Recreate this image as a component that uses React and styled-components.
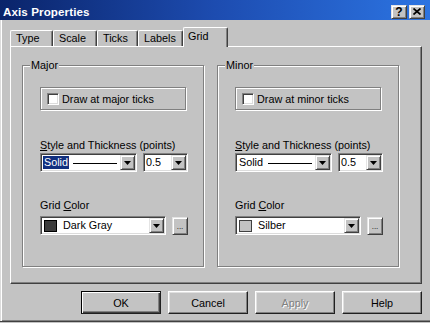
import React from "react";
import styled, { createGlobalStyle } from "styled-components";

const Global = createGlobalStyle`
  html, body {
    margin: 0;
    padding: 0;
    background: #c3c3c3;
  }
  body {
    font-family: "Liberation Sans", Arial, sans-serif;
    font-size: 10.8px;
    color: #000;
  }
`;

const Window = styled.div`
  width: 430px;
  height: 322px;
  box-sizing: border-box;
  display: flex;
  flex-direction: column;
  background: #c3c3c3;
  border-bottom: 1px solid #404040;
  box-shadow: inset 0 -1px 0 #808080;
`;

const TitleBar = styled.div`
  height: 20px;
  flex: none;
  box-sizing: border-box;
  display: flex;
  align-items: center;
  padding: 3px 5px 0 3px;
  background: linear-gradient(to right, #0a246a 0%, #1d4cb0 50%, #2c74e2 100%);
`;

const Title = styled.div`
  flex: 1;
  color: #fff;
  font-weight: bold;
  font-size: 11.6px;
  letter-spacing: 0.1px;
`;

const Raised = styled.div`
  box-sizing: border-box;
  background: #c3c3c3;
  border-top: 1px solid #e4e4e4;
  border-left: 1px solid #e4e4e4;
  border-right: 1px solid #404040;
  border-bottom: 1px solid #404040;
  box-shadow: inset 1px 1px 0 #fff, inset -1px -1px 0 #808080;
`;

const CaptionButton = styled(Raised)`
  width: 16px;
  height: 14px;
  margin-left: 2px;
  display: flex;
  align-items: center;
  justify-content: center;
  font-weight: bold;
  font-size: 12px;
  line-height: 12px;
`;

const Body = styled.div`
  flex: 1;
  display: flex;
  flex-direction: column;
  padding: 7px 0 0 9px;
  border-left: 1px solid #dcdcdc;
  box-shadow: inset 1px 0 0 #fff;
`;

const TabStrip = styled.div`
  display: flex;
  align-items: flex-end;
  height: 19px;
`;

const Tab = styled.div`
  box-sizing: border-box;
  width: ${(p) => p.$w}px;
  height: ${(p) => (p.$active ? 20 : 16)}px;
  margin-bottom: ${(p) => (p.$active ? -1 : 0)}px;
  padding: ${(p) => (p.$active ? "2px 0 0 4px" : "1px 0 0 5px")};
  line-height: 13px;
  background: #c3c3c3;
  border-top: 1px solid #fff;
  border-left: 1px solid #fff;
  border-right: 1px solid #404040;
  border-radius: 2px 2px 0 0;
  box-shadow: inset -1px 0 0 #808080;
  position: relative;
  z-index: ${(p) => (p.$active ? 1 : 0)};
`;

const Panel = styled.div`
  box-sizing: border-box;
  width: 412px;
  height: 238px;
  display: flex;
  gap: 13px;
  padding: 18px 0 0 11px;
  border-top: 1px solid #fff;
  border-left: 1px solid #fff;
  border-right: 1px solid #404040;
  border-bottom: 1px solid #404040;
  box-shadow: inset -1px -1px 0 #808080;
`;

const Group = styled.div`
  position: relative;
  box-sizing: border-box;
  width: 182px;
  height: 202px;
  padding: 21px 0 0 17px;
  border: 1px solid #808080;
  box-shadow: 1px 1px 0 #fff, inset 1px 1px 0 #fff;
`;

const Legend = styled.div`
  position: absolute;
  top: -7px;
  left: 7px;
  padding: 0 1px;
  line-height: 13px;
  background: #c3c3c3;
`;

const CheckFrame = styled.div`
  box-sizing: border-box;
  width: 146px;
  height: 23px;
  display: flex;
  align-items: center;
  gap: 3px;
  padding-left: 6px;
  border: 1px solid #808080;
  box-shadow: 1px 1px 0 #fff, inset 1px 1px 0 #fff;
`;

const Checkbox = styled.div`
  box-sizing: border-box;
  width: 12px;
  height: 12px;
  background: #fff;
  border-top: 1px solid #808080;
  border-left: 1px solid #808080;
  border-right: 1px solid #fff;
  border-bottom: 1px solid #fff;
  box-shadow: inset 1px 1px 0 #404040, inset -1px -1px 0 #dcdcdc;
`;

const FieldLabel = styled.div`
  margin-top: ${(p) => p.$top}px;
  line-height: 13px;
  u {
    text-decoration: underline;
    text-underline-offset: 1px;
  }
`;

const Row = styled.div`
  display: flex;
  align-items: flex-start;
  gap: 6px;
  margin-top: ${(p) => p.$top}px;
`;

const Combo = styled.div`
  box-sizing: border-box;
  width: ${(p) => p.$w}px;
  height: 19px;
  display: flex;
  align-items: center;
  background: #fff;
  border-top: 1px solid #808080;
  border-left: 1px solid #808080;
  border-right: 1px solid #fff;
  border-bottom: 1px solid #fff;
  box-shadow: inset 1px 1px 0 #404040, inset -1px -1px 0 #dcdcdc;
  padding: 1px;
`;

const ComboText = styled.span`
  flex: 1;
  display: flex;
  align-items: center;
  padding-left: ${(p) => p.$pad || 1}px;
  line-height: 13px;
  white-space: nowrap;
`;

const Selected = styled.span`
  padding: 0 1px;
  background: ${(p) => (p.$on ? "#12307f" : "transparent")};
  color: ${(p) => (p.$on ? "#fff" : "#000")};
`;

const LineSample = styled.span`
  flex: 1;
  height: 1px;
  margin: 1px 3px 0 4px;
  background: #000;
`;

const ArrowButton = styled(Raised)`
  width: 15px;
  height: 15px;
  flex: none;
  display: flex;
  align-items: center;
  justify-content: center;
`;

const Swatch = styled.span`
  box-sizing: border-box;
  width: 13px;
  height: 12px;
  margin: 0 6px 0 1px;
  flex: none;
  background: ${(p) => p.$color};
  border: 1px solid ${(p) => p.$edge};
`;

const DotsButton = styled(Raised)`
  width: 16px;
  height: 18px;
  margin-top: 1px;
  display: flex;
  align-items: flex-end;
  justify-content: center;
  font-size: 8px;
  line-height: 10px;
  padding-bottom: 2px;
`;

const ButtonRow = styled.div`
  width: 412px;
  display: flex;
  justify-content: flex-end;
  gap: 7px;
  margin-top: 7px;
`;

const Button = styled.div`
  box-sizing: border-box;
  width: 80px;
  height: 23px;
  display: flex;
  align-items: center;
  justify-content: center;
  background: #c3c3c3;
  color: ${(p) => (p.$disabled ? "#808080" : "#000")};
  text-shadow: ${(p) => (p.$disabled ? "1px 1px 0 #fff" : "none")};
  border-top: 1px solid ${(p) => (p.$default ? "#000" : "#fff")};
  border-left: 1px solid ${(p) => (p.$default ? "#000" : "#fff")};
  border-right: 1px solid #202020;
  border-bottom: 1px solid #202020;
  box-shadow: ${(p) =>
    p.$default
      ? "inset 1px 1px 0 #fff, inset -1px -1px 0 #404040, inset -2px -2px 0 #808080"
      : "inset -1px -1px 0 #808080, inset 1px 1px 0 #e0e0e0"};
`;

const DownArrow = () => (
  <svg width="7" height="4" viewBox="0 0 7 4">
    <path d="M0 0h7L3.5 4z" fill="#000" />
  </svg>
);

const CloseGlyph = () => (
  <svg width="8" height="7" viewBox="0 0 8 7">
    <path d="M0.5 0.5L7.5 6.5M7.5 0.5L0.5 6.5" stroke="#000" strokeWidth="1.7" />
  </svg>
);

const tabs = [
  { label: "Type", w: 43 },
  { label: "Scale", w: 44 },
  { label: "Ticks", w: 41 },
  { label: "Labels", w: 45 },
  { label: "Grid", w: 45, active: true },
];

const GridGroup = ({ title, tickLabel, highlight, color, edge, colorName }) => (
  <Group>
    <Legend>{title}</Legend>
    <CheckFrame>
      <Checkbox />
      <span>{tickLabel}</span>
    </CheckFrame>
    <FieldLabel $top={29}>
      <u>S</u>tyle and Thickness (points)
    </FieldLabel>
    <Row $top={1}>
      <Combo $w={97}>
        <ComboText>
          <Selected $on={highlight}>Solid</Selected>
          <LineSample />
        </ComboText>
        <ArrowButton>
          <DownArrow />
        </ArrowButton>
      </Combo>
      <Combo $w={45}>
        <ComboText $pad={1}>0.5</ComboText>
        <ArrowButton>
          <DownArrow />
        </ArrowButton>
      </Combo>
    </Row>
    <FieldLabel $top={27}>
      Grid <u>C</u>olor
    </FieldLabel>
    <Row $top={4}>
      <Combo $w={126}>
        <ComboText $pad={1}>
          <Swatch $color={color} $edge={edge} />
          {colorName}
        </ComboText>
        <ArrowButton>
          <DownArrow />
        </ArrowButton>
      </Combo>
      <DotsButton>...</DotsButton>
    </Row>
  </Group>
);

export default function App() {
  return (
    <>
      <Global />
      <Window>
        <TitleBar>
          <Title>Axis Properties</Title>
          <CaptionButton>?</CaptionButton>
          <CaptionButton>
            <CloseGlyph />
          </CaptionButton>
        </TitleBar>
        <Body>
          <TabStrip>
            {tabs.map((t) => (
              <Tab key={t.label} $w={t.w} $active={t.active}>
                {t.label}
              </Tab>
            ))}
          </TabStrip>
          <Panel>
            <GridGroup
              title="Major"
              tickLabel="Draw at major ticks"
              highlight
              color="#3c3c3c"
              edge="#000"
              colorName="Dark Gray"
            />
            <GridGroup
              title="Minor"
              tickLabel="Draw at minor ticks"
              color="#c3c3c3"
              edge="#404040"
              colorName="Silber"
            />
          </Panel>
          <ButtonRow>
            <Button $default>OK</Button>
            <Button>Cancel</Button>
            <Button $disabled>Apply</Button>
            <Button>Help</Button>
          </ButtonRow>
        </Body>
      </Window>
    </>
  );
}
